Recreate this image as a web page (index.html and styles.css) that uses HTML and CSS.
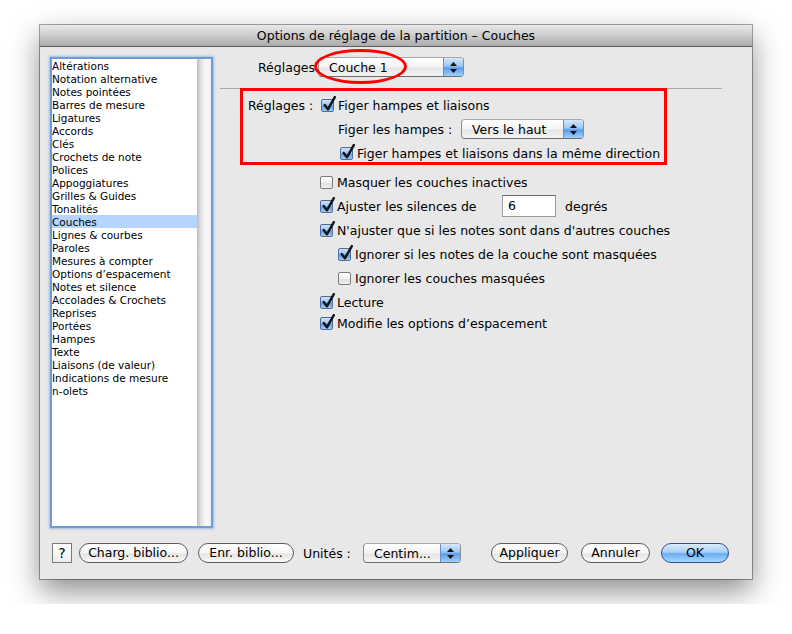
FILE: index.html
```html
<!DOCTYPE html>
<html lang="fr">
<head>
    <meta charset="UTF-8">
    <title>Options de réglage de la partition – Couches</title>
    <link rel="stylesheet" href="styles.css">
</head>
<body>
    <div class="window">
        <div class="titlebar">Options de réglage de la partition – Couches</div>
        <div class="content">
            <div class="top">
                <div class="listbox">
                    <ul class="list">
                        <li>Altérations</li>
                        <li>Notation alternative</li>
                        <li>Notes pointées</li>
                        <li>Barres de mesure</li>
                        <li>Ligatures</li>
                        <li>Accords</li>
                        <li>Clés</li>
                        <li>Crochets de note</li>
                        <li>Polices</li>
                        <li>Appoggiatures</li>
                        <li>Grilles &amp; Guides</li>
                        <li>Tonalités</li>
                        <li class="selected">Couches</li>
                        <li>Lignes &amp; courbes</li>
                        <li>Paroles</li>
                        <li>Mesures à compter</li>
                        <li>Options d’espacement</li>
                        <li>Notes et silence</li>
                        <li>Accolades &amp; Crochets</li>
                        <li>Reprises</li>
                        <li>Portées</li>
                        <li>Hampes</li>
                        <li>Texte</li>
                        <li>Liaisons (de valeur)</li>
                        <li>Indications de mesure</li>
                        <li>n-olets</li>
                    </ul>
                    <div class="scrolltrack"></div>
                </div>

                <div class="main">
                    <div class="preset-row">
                        <span class="preset-label">Réglages</span>
                        <div class="popup popup-couche">
                            <span class="popup-text">Couche 1</span>
                            <span class="popup-arrows"><svg width="7" height="11" viewBox="0 0 7 11"><polygon points="0,4 3.5,0 7,4" fill="#111"/><polygon points="0,7 3.5,11 7,7" fill="#111"/></svg></span>
                        </div>
                    </div>
                    <div class="sep"></div>

                    <div class="opts">
                        <div class="row">
                            <span class="row-label">Réglages :</span>
                            <span class="cb on"><svg viewBox="0 0 14 16"><path d="M2.5 8.5 L5.5 12.5 L12 1" fill="none" stroke="#151515" stroke-width="2.3" stroke-linecap="round" stroke-linejoin="round"/></svg></span>
                            <span>Figer hampes et liaisons</span>
                        </div>
                        <div class="row indent-2">
                            <span class="hampes-label">Figer les hampes :</span>
                            <div class="popup popup-hampes">
                                <span class="popup-text">Vers le haut</span>
                                <span class="popup-arrows"><svg width="7" height="11" viewBox="0 0 7 11"><polygon points="0,4 3.5,0 7,4" fill="#111"/><polygon points="0,7 3.5,11 7,7" fill="#111"/></svg></span>
                            </div>
                        </div>
                        <div class="row indent-2b">
                            <span class="cb on"><svg viewBox="0 0 14 16"><path d="M2.5 8.5 L5.5 12.5 L12 1" fill="none" stroke="#151515" stroke-width="2.3" stroke-linecap="round" stroke-linejoin="round"/></svg></span>
                            <span>Figer hampes et liaisons dans la même direction</span>
                        </div>

                        <div class="row indent-1 gap-top">
                            <span class="cb"></span>
                            <span>Masquer les couches inactives</span>
                        </div>
                        <div class="row indent-1">
                            <span class="cb on"><svg viewBox="0 0 14 16"><path d="M2.5 8.5 L5.5 12.5 L12 1" fill="none" stroke="#151515" stroke-width="2.3" stroke-linecap="round" stroke-linejoin="round"/></svg></span>
                            <span class="silence-label">Ajuster les silences de</span>
                            <span class="textfield">6</span>
                            <span class="unit">degrés</span>
                        </div>
                        <div class="row indent-1">
                            <span class="cb on"><svg viewBox="0 0 14 16"><path d="M2.5 8.5 L5.5 12.5 L12 1" fill="none" stroke="#151515" stroke-width="2.3" stroke-linecap="round" stroke-linejoin="round"/></svg></span>
                            <span>N'ajuster que si les notes sont dans d'autres couches</span>
                        </div>
                        <div class="row indent-2">
                            <span class="cb on"><svg viewBox="0 0 14 16"><path d="M2.5 8.5 L5.5 12.5 L12 1" fill="none" stroke="#151515" stroke-width="2.3" stroke-linecap="round" stroke-linejoin="round"/></svg></span>
                            <span>Ignorer si les notes de la couche sont masquées</span>
                        </div>
                        <div class="row indent-2">
                            <span class="cb"></span>
                            <span>Ignorer les couches masquées</span>
                        </div>
                        <div class="row indent-1">
                            <span class="cb on"><svg viewBox="0 0 14 16"><path d="M2.5 8.5 L5.5 12.5 L12 1" fill="none" stroke="#151515" stroke-width="2.3" stroke-linecap="round" stroke-linejoin="round"/></svg></span>
                            <span>Lecture</span>
                        </div>
                        <div class="row indent-1 short">
                            <span class="cb on"><svg viewBox="0 0 14 16"><path d="M2.5 8.5 L5.5 12.5 L12 1" fill="none" stroke="#151515" stroke-width="2.3" stroke-linecap="round" stroke-linejoin="round"/></svg></span>
                            <span>Modifie les options d’espacement</span>
                        </div>
                    </div>
                </div>
            </div>

            <div class="bottombar">
                <span class="help">?</span>
                <button class="btn btn-charg">Charg. biblio...</button>
                <button class="btn btn-enr">Enr. biblio...</button>
                <span class="units-label">Unités :</span>
                <div class="popup popup-units">
                    <span class="popup-text">Centim...</span>
                    <span class="popup-arrows"><svg width="7" height="11" viewBox="0 0 7 11"><polygon points="0,4 3.5,0 7,4" fill="#111"/><polygon points="0,7 3.5,11 7,7" fill="#111"/></svg></span>
                </div>
                <button class="btn btn-apply">Appliquer</button>
                <button class="btn btn-cancel">Annuler</button>
                <button class="btn btn-ok">OK</button>
            </div>
        </div>

        <!-- red annotations drawn over the dialog -->
        <div class="mark-box"></div>
        <div class="mark-ellipse"></div>
    </div>
</body>
</html>
```

FILE: styles.css
```css
* {
    margin: 0;
    padding: 0;
    box-sizing: border-box;
}

body {
    background: #fff;
    font-family: "DejaVu Sans", "Noto Sans", sans-serif;
    font-size: 12.5px;
    color: #000;
    padding: 25px 40px;
}

.window {
    position: relative;
    width: 712px;
    height: 554px;
    background: #e8e8e8;
    box-shadow: 0 0 0 1px rgba(0, 0, 0, 0.35), 0 12px 28px rgba(0, 0, 0, 0.45);
}

.titlebar {
    height: 22px;
    line-height: 21px;
    text-align: center;
    background: linear-gradient(#e9e9e9, #cfcfcf 45%, #acacac);
    border-bottom: 1px solid #5e5e5e;
    border-radius: 4px 4px 0 0;
}

.content {
    padding: 10px 30px 0 10px;
}

.top {
    display: flex;
    height: 471px;
}

/* left list */
.listbox {
    display: flex;
    width: 163px;
    height: 471px;
    border: 2px solid #6f9cd9;
    box-shadow: 0 0 2px 1px rgba(110, 160, 225, 0.6);
    background: #fff;
}

.list {
    list-style: none;
    width: 145px;
    font-size: 10.5px;
}

.list li {
    height: 13px;
    line-height: 14px;
    white-space: nowrap;
}

.list li.selected {
    background: #b5d5ff;
}

.scrolltrack {
    width: 14px;
    background: linear-gradient(to right, #bcbcbc, #e4e4e4 30%, #f9f9f9 65%, #efefef);
}

/* right side */
.main {
    margin-left: 7px;
    width: 502px;
}

.preset-row {
    display: flex;
    align-items: center;
    height: 20px;
    padding-left: 38px;
}

.preset-label {
    width: 60px;
}

.popup {
    display: flex;
    align-items: center;
    flex: none;
    height: 20px;
    border: 1px solid #8c8c8c;
    border-top-color: #a8a8a8;
    border-bottom-color: #6f6f6f;
    border-radius: 4px;
    background: linear-gradient(#ffffff, #f4f4f4 50%, #e6e6e6 55%, #f3f3f3);
    overflow: hidden;
}

.popup-text {
    flex: 1;
    padding-left: 10px;
    white-space: nowrap;
}

.popup-arrows {
    width: 20px;
    height: 100%;
    display: flex;
    align-items: center;
    justify-content: center;
    border-left: 1px solid #6b8fc4;
    background: linear-gradient(#d6e8fc, #9cc6f4 45%, #5a9ce8 55%, #9fd0fb);
}

.popup-couche {
    width: 146px;
}

.popup-hampes {
    width: 123px;
}

.popup-units {
    width: 98px;
    margin-left: 13px;
}

.sep {
    margin-top: 11px;
    height: 1px;
    background: #a9a9a9;
}

.opts {
    margin-top: 4px;
    padding-left: 28px;
}

.row {
    display: flex;
    align-items: center;
    height: 24px;
    white-space: nowrap;
}

.row.gap-top {
    margin-top: 5px;
}

.row.short {
    height: 20px;
    margin-top: -1px;
}

.row-label {
    width: 73px;
}

.indent-1 {
    padding-left: 72px;
}

.indent-2 {
    padding-left: 90px;
}

.indent-2b {
    padding-left: 92px;
}

.hampes-label {
    width: 123px;
}

.cb {
    position: relative;
    width: 13px;
    height: 13px;
    margin-right: 4px;
    flex: none;
    border: 1px solid #7c7c7c;
    border-radius: 2px;
    background: linear-gradient(#ffffff, #f2f2f2 50%, #dedede 55%, #f0f0f0);
}

.cb.on {
    border-color: #4d6e9c;
    background: linear-gradient(#cfe3fb, #9cc6f2 45%, #5d9ee8 55%, #9dcff9);
}

.cb svg {
    position: absolute;
    left: 0;
    top: -4px;
    width: 15px;
    height: 17px;
}

.silence-label {
    width: 165px;
}

.textfield {
    width: 54px;
    height: 22px;
    line-height: 20px;
    padding-left: 5px;
    background: #fff;
    border: 1px solid #9a9a9a;
    border-top-color: #6a6a6a;
}

.unit {
    margin-left: 9px;
}

/* bottom buttons */
.bottombar {
    display: flex;
    align-items: center;
    margin: 15px -30px 0 0;
    padding-left: 2px;
    height: 20px;
    white-space: nowrap;
}

.bottombar > * {
    flex: none;
}

.help {
    width: 20px;
    height: 20px;
    border: 1px solid #7a7a7a;
    background: linear-gradient(#ffffff, #ececec);
    text-align: center;
    line-height: 18px;
    font-size: 14px;
}

.btn {
    height: 20px;
    border: 1px solid #5c5c5c;
    border-radius: 10px;
    background: linear-gradient(#ffffff, #f6f6f6 50%, #e4e4e4 55%, #f8f8f8);
    font-family: inherit;
    font-size: 12.5px;
    color: #000;
    line-height: 18px;
    padding: 0;
}

.btn-charg {
    width: 109px;
    margin-left: 7px;
}

.btn-enr {
    width: 96px;
    margin-left: 10px;
}

.units-label {
    width: 47px;
    margin-left: 9px;
}

.btn-apply {
    width: 77px;
    margin-left: 30px;
}

.btn-cancel {
    width: 69px;
    margin-left: 13px;
}

.btn-ok {
    width: 68px;
    margin-left: 11px;
    border-color: #2f4f8f;
    background: linear-gradient(#dcecfd, #a8d0f8 45%, #6aacf2 55%, #a9dafd);
}

/* red annotations */
.mark-box {
    position: absolute;
    left: 200px;
    top: 63px;
    width: 427px;
    height: 77px;
    border: 3px solid #ff0000;
}

.mark-ellipse {
    position: absolute;
    left: 274px;
    top: 24px;
    width: 93px;
    height: 35px;
    border: 3px solid #ff0000;
    border-radius: 50%;
}
```
